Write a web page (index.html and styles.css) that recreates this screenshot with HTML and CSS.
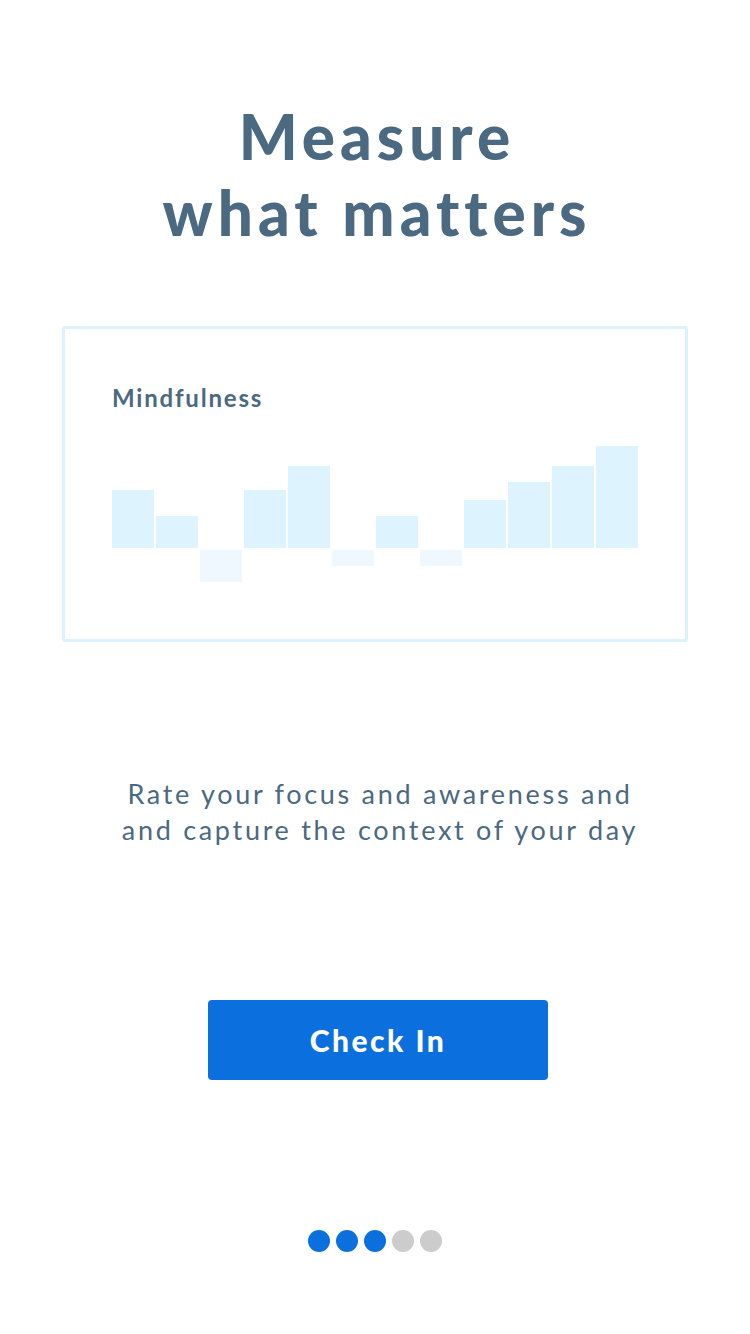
FILE: index.html
```html
<!DOCTYPE html>
<html lang="en">
<head>
    <meta charset="UTF-8">
    <meta name="viewport" content="width=device-width, initial-scale=1.0">
    <title>Measure what matters</title>
    <link rel="stylesheet" href="styles.css">
</head>
<body>
    <main class="screen">
        <h1 class="title">Measure<br>what matters</h1>

        <section class="card">
            <h2 class="card-title">Mindfulness</h2>
            <div class="chart">
                <div class="bar" style="height: 58px"></div>
                <div class="bar" style="height: 32px"></div>
                <div class="bar neg" style="height: 32px"></div>
                <div class="bar" style="height: 58px"></div>
                <div class="bar" style="height: 82px"></div>
                <div class="bar neg" style="height: 16px"></div>
                <div class="bar" style="height: 32px"></div>
                <div class="bar neg" style="height: 16px"></div>
                <div class="bar" style="height: 48px"></div>
                <div class="bar" style="height: 66px"></div>
                <div class="bar" style="height: 82px"></div>
                <div class="bar" style="height: 102px"></div>
            </div>
        </section>

        <p class="intro">Rate your focus and awareness and<br>and capture the context of your day</p>

        <button class="check-in">Check In</button>

        <div class="dots">
            <span class="dot active"></span>
            <span class="dot active"></span>
            <span class="dot active"></span>
            <span class="dot"></span>
            <span class="dot"></span>
        </div>
    </main>
</body>
</html>
```

FILE: styles.css
```css
/* onboarding screen */
body {
    margin: 0;
    background: #fff;
    font-family: Lato, "Open Sans", sans-serif;
    color: #4b6980;
}

.screen {
    display: flex;
    flex-direction: column;
    align-items: center;
    padding-top: 98px;
}

.title {
    margin: 0 0 0 4px;
    font-size: 62px;
    line-height: 76px;
    font-weight: 900;
    letter-spacing: 5px;
    text-align: center;
}

.card {
    box-sizing: border-box;
    width: 626px;
    height: 316px;
    margin-top: 76px;
    border: 3px solid #dcf2fc;
    border-radius: 3px;
    padding: 54px 47px 0;
}

.card-title {
    margin: 0;
    font-size: 24px;
    font-weight: 700;
    letter-spacing: 1.8px;
}

.chart {
    display: flex;
    gap: 2px;
    height: 136px;
    margin-top: 34px;
}

.bar {
    width: 42px;
    align-self: flex-end;
    margin-bottom: 34px;
    background: #ddf3fd;
}

.bar.neg {
    align-self: flex-start;
    margin-top: 104px;
    margin-bottom: 0;
    background: #eff8fe;
}

.intro {
    margin: 134px 0 0 10px;
    font-size: 27px;
    line-height: 36px;
    letter-spacing: 2.7px;
    text-align: center;
}

.check-in {
    width: 340px;
    height: 80px;
    margin: 152px 0 0 6px;
    border: none;
    border-radius: 4px;
    background: #0b70dd;
    color: #fff;
    font-family: Lato, "Open Sans", sans-serif;
    font-size: 30px;
    font-weight: 900;
    letter-spacing: 2.5px;
    cursor: pointer;
}

.dots {
    display: flex;
    gap: 6px;
    margin-top: 150px;
}

.dot {
    width: 22px;
    height: 22px;
    border-radius: 50%;
    background: #cccccc;
}

.dot.active {
    background: #0b70dd;
}
```
